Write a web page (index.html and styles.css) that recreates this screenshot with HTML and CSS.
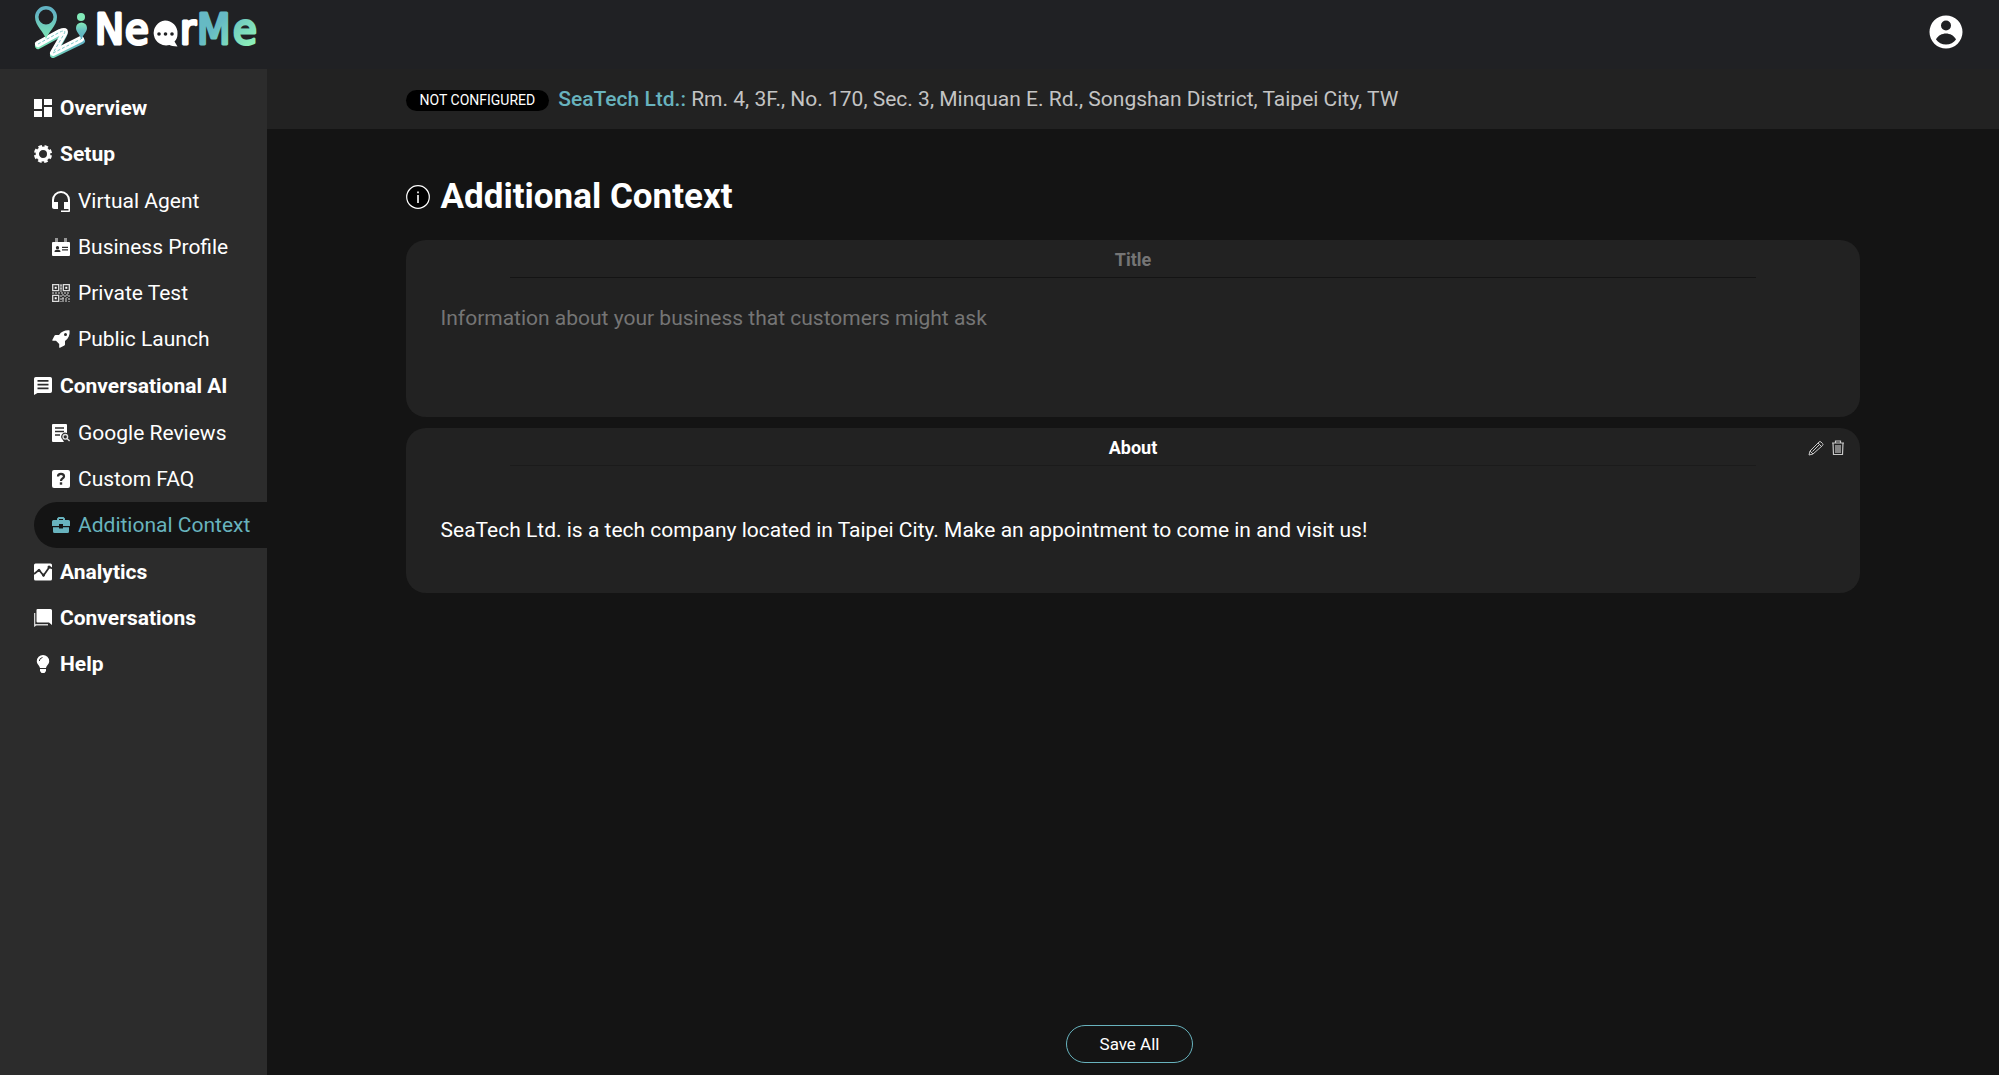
FILE: index.html
```html
<!DOCTYPE html>
<html lang="en">
<head>
<meta charset="utf-8">
<meta name="viewport" content="width=device-width, initial-scale=1">
<title>NearMe – Additional Context</title>
<link rel="stylesheet" href="styles.css">
</head>
<body>
<header class="header">
  <a class="logo" href="#" aria-label="NearMe home">
    <svg width="226" height="56" viewBox="34 4 226 56">
      <defs>
        <linearGradient id="pin" x1="0" y1="0" x2="0" y2="1"><stop offset="0.2" stop-color="#62b3c3"/><stop offset="1" stop-color="#7ee8b4"/></linearGradient>
        <linearGradient id="figure" x1="0" y1="0" x2="0" y2="1"><stop offset="0" stop-color="#83eab9"/><stop offset="0.5" stop-color="#68bfc2"/><stop offset="1" stop-color="#5aaec0"/></linearGradient>
        <linearGradient id="road" x1="0" y1="0" x2="1" y2="0"><stop offset="0" stop-color="#7ee8b8"/><stop offset="1" stop-color="#62b3c3"/></linearGradient>
        <linearGradient id="me" gradientUnits="userSpaceOnUse" x1="222" y1="20" x2="250" y2="48"><stop offset="0" stop-color="#66bac4"/><stop offset="1" stop-color="#8df2b8"/></linearGradient>
      </defs>
      <path d="M38 46 62 33 Q66 31 64 35 L53 55 82 41" fill="none" stroke="url(#road)" stroke-width="6" stroke-linecap="round" stroke-linejoin="round"/>
      <path d="M38 44 60 32 Q67 29 64 34 L53 53 81 39" fill="none" stroke="#fff" stroke-width="6" stroke-linecap="round" stroke-linejoin="round"/>
      <path d="M38 44 60 32 Q67 29 64 34 L53 53 81 39" fill="none" stroke="#7cc9c8" stroke-width="1" stroke-dasharray="3 2"/>
      <path fill="url(#pin)" fill-rule="evenodd" d="M46 39C44 32 35 26 35 17a11 11 0 0 1 22 0C57 26 48 32 46 39ZM46 9.500a7.500 7.500 0 1 0 0 15 7.500 7.500 0 0 0 0-15Z"/>
      <circle cx="81" cy="17" r="4" fill="#82eab9"/>
      <path fill="url(#figure)" d="M81 39c-1-5-5-7-5-11a5.500 5.500 0 0 1 11 0c0 4-4 6-5 11Z"/>
      <text class="logo-name" y="44" fill="#fff" stroke="#fff"><tspan x="95">N</tspan><tspan x="125">e</tspan><tspan x="180">r</tspan></text>
      <text class="logo-name" y="44" fill="url(#me)" stroke="url(#me)"><tspan x="197">M</tspan><tspan x="233">e</tspan></text>
      <path fill="#fff" d="M165 20.500a12.500 12.500 0 0 1 12.500 13c0 4-1 6-3 8l3 5c-4 0-7-1-8-1.500A12.500 12.500 0 1 1 165 20.500Z"/>
      <g fill="#202124"><circle cx="159" cy="34" r="1.800"/><circle cx="165.500" cy="34" r="1.800"/><circle cx="172" cy="34" r="1.800"/></g>
    </svg>
  </a>
  <button class="icon-button account" type="button" aria-label="Account">
    <svg width="34" height="34" viewBox="0 0 34 34"><path fill="#fff" fill-rule="evenodd" d="M17 .500a16.500 16.500 0 1 1 0 33 16.500 16.500 0 0 1 0-33ZM17 5.500a5 5 0 1 0 0 10 5 5 0 0 0 0-10ZM7 24.500c2-4 6-6 10-6s8 2 10 6c-2 3-6 5-10 5s-8-2-10-5Z"/></svg>
  </button>
</header>

<div class="layout">
  <nav class="sidebar" aria-label="Main">
    <ul class="menu">
      <li><a class="item" href="#"><svg class="icon" viewBox="0 0 18 18"><path d="M0 0h8v10H0zM10 0h8v6h-8zM0 12h8v6H0zM10 8h8v10h-8z"/></svg>Overview</a></li>
      <li>
        <a class="item" href="#"><svg class="icon" viewBox="0 0 18 18"><g fill="none" stroke="currentColor"><circle cx="9" cy="9" r="5.700" stroke-width="3.400"/><circle cx="9" cy="9" r="8" stroke-width="2.200" stroke-dasharray="3.700 2.583" stroke-dashoffset="-1.300"/></g></svg>Setup</a>
        <ul class="submenu">
          <li><a class="item" href="#"><svg class="icon" viewBox="0 0 18 18"><path d="M0 8a9 9 0 0 1 18 0v11c0 .600-.500 1-1 1H9v-1.500h7.500V17H12v-7h4V8A7 7 0 0 0 2 8v2h4v7H2c-1 0-2-1-2-2Z"/></svg>Virtual Agent</a></li>
          <li><a class="item" href="#"><svg class="icon" viewBox="0 0 18 18"><path fill-rule="evenodd" d="M1 4h16q1 0 1 1v12q0 1-1 1H1q-1 0-1-1V5q0-1 1-1ZM5.500 8a1.600 1.600 0 1 0 0 3.300 1.600 1.600 0 0 0 0-3.300ZM2.500 14h6c0-2-1-2.300-3-2.300s-3 .300-3 2.300ZM10 8.700h6v1.300h-6ZM10 11.200h6v1.300h-6Z"/><path d="M3 0h3v4H3zM12 0h3v4h-3z" opacity=".500"/></svg>Business Profile</a></li>
          <li><a class="item" href="#"><svg class="icon" viewBox="0 0 18 18"><g fill="none" stroke="#ddd"><path d="M.700.700h6v6h-6zM11.300.700h6v6h-6zM.700 11.300h6v6h-6z" stroke-width="1.300"/><path d="M9 0v8M8 2h2M8 5h2M0 9h18M9 11v7M11 10v8M13 11v3M15 10v4M17 11v7M13 17h3M10 15h5" stroke-dasharray="2 1"/></g><path d="M2.700 2.700h2v2h-2zM13.300 2.700h2v2h-2zM2.700 13.300h2v2h-2z"/></svg>Private Test</a></li>
          <li><a class="item" href="#"><svg class="icon" viewBox="0 0 18 18"><path fill-rule="evenodd" d="M17.600.400C13 0 9.500 1.500 7 5H3.500Q3 5 2.600 5.600L.300 10q-.300.800.500.800H4L7.200 14v3.200q0 .800.800.500l4.400-2.300q.600-.400.600-.900V11C16.500 8.500 18 5 17.600.400ZM13.500 3a1.500 1.500 0 1 1 0 3 1.500 1.500 0 0 1 0-3Z"/></svg>Public Launch</a></li>
        </ul>
      </li>
      <li>
        <a class="item" href="#"><svg class="icon" viewBox="0 0 18 18"><path fill-rule="evenodd" d="M1.800 0h14.400Q18 0 18 1.800v12.400q0 1.800-1.800 1.800H3.500L0 18V1.800Q0 0 1.800 0ZM3.500 3v1.700h11V3ZM3.500 6.800v1.700h11V6.800ZM3.500 10.600v1.700h11v-1.700Z"/></svg>Conversational AI</a>
        <ul class="submenu">
          <li><a class="item" href="#"><svg class="icon" viewBox="0 0 18 18"><path fill-rule="evenodd" d="M1 0h13q1 0 1 1v8a4 4 0 0 0-4.500 6.500L12 18H1q-1 0-1-1V1q0-1 1-1ZM3 3.200v1.500h9V3.200ZM3 6.700v1.500h9V6.700ZM3 10.200v1.500h5v-1.500Z"/><g fill="none" stroke="#ddd" stroke-width="1.400"><circle cx="13.300" cy="12.800" r="2.300"/><path d="m15 14.500 2.600 2.600"/></g></svg>Google Reviews</a></li>
          <li><a class="item" href="#"><svg class="icon" viewBox="0 0 18 18"><rect width="18" height="18" rx="2"/><path d="M6 6.500C6 3 12 3 12 6.500 12 8.500 9 8.500 9 11" fill="none" stroke="#2c2c2c" stroke-width="2.200"/><path d="M7.800 12.300h2.400v2.400H7.800z" fill="#2c2c2c"/></svg>Custom FAQ</a></li>
          <li><a class="item active" href="#" aria-current="page"><svg class="icon" viewBox="0 0 18 18"><path fill-rule="evenodd" d="M5 4V2.500L6.500 1h5L13 2.500V4h3.500Q18 4 18 5.500V10h-7V8H7v2H0V5.500Q0 4 1.500 4ZM7 4h4V3H7ZM1 11.200h6V12.500h4v-1.300h6v4.300q0 1.500-1.500 1.500h-13Q1 17 1 15.500Z"/></svg>Additional Context</a></li>
        </ul>
      </li>
      <li><a class="item" href="#"><svg class="icon" viewBox="0 0 18 18"><rect y=".500" width="18" height="17" rx="1.500"/><path d="m0 11 5-4 4.500 5.500L15.500 4 18 5.500" fill="none" stroke="#2c2c2c" stroke-width="1.700"/><g fill="#2c2c2c"><circle cx="5" cy="7.500" r="1.500"/><circle cx="9.500" cy="12" r="1.500"/><circle cx="15" cy="4" r="1.500"/></g></svg>Analytics</a></li>
      <li><a class="item" href="#"><svg class="icon" viewBox="0 0 18 18"><path d="M3.500 0h13Q18 0 18 1.500V16l-3-2.500H3.500Q2.500 13.500 2.500 12.500V1Q2.500 0 3.500 0Z"/><path d="M0 4h1.300v11H14v1.500H2.500L0 18Z" opacity=".800"/></svg>Conversations</a></li>
      <li><a class="item" href="#"><svg class="icon" viewBox="0 0 18 18"><path d="M9 0a6.200 6.200 0 0 1 6.200 6.200c0 3-2.700 4.300-3.200 6.800H6c-.500-2.500-3.200-3.800-3.200-6.800A6.200 6.200 0 0 1 9 0ZM6 14h6v2l-1.500 2h-3L6 16Z"/><path d="M5.300 6Q5.500 3 8.500 2.500" fill="none" stroke="#2c2c2c"/></svg>Help</a></li>
    </ul>
  </nav>

  <main class="main">
    <div class="location">
      <span class="badge">NOT CONFIGURED</span>
      <p class="address"><strong class="company">SeaTech Ltd.:</strong> Rm. 4, 3F., No. 170, Sec. 3, Minquan E. Rd., Songshan District, Taipei City, TW</p>
    </div>
    <form class="content">
      <div class="heading">
        <button class="icon-button" type="button" aria-label="About additional context">
          <svg width="24" height="24" viewBox="0 0 24 24"><circle cx="12" cy="12" r="11.300" fill="#000" stroke="#fff" stroke-width="1.200"/><path d="M11.200 10h1.600v8h-1.600zM11.200 6.500h1.600v1.700h-1.600z" fill="#fff"/></svg>
        </button>
        <h1 class="title">Additional Context</h1>
      </div>
      <section class="card">
        <input class="card-title" type="text" placeholder="Title" aria-label="Title">
        <textarea class="card-text" placeholder="Information about your business that customers might ask" aria-label="Information"></textarea>
      </section>
      <section class="card">
        <h2 class="card-title saved">About</h2>
        <div class="actions">
          <button class="icon-button" type="button" aria-label="Edit">
            <svg width="16" height="16" viewBox="0 0 16 16" fill="none" stroke="#c8c8c8"><path d="M1 15l1-4L11 2q1-1 2 0l1.500 1.500q1 1 0 2L5 14ZM2 11l3 3M10 3l3.500 3.500M4.500 11.500l7-7"/></svg>
          </button>
          <button class="icon-button" type="button" aria-label="Delete">
            <svg width="14" height="16" viewBox="0 0 14 16" fill="none" stroke="#c8c8c8"><path d="M1 3h12M4.500 3V1h5v2M2 3l.500 11.500h9L12 3M5 5v8M7 5v8M9 5v8" stroke-width="1.200"/></svg>
          </button>
        </div>
        <p class="card-body">SeaTech Ltd. is a tech company located in Taipei City. Make an appointment to come in and visit us!</p>
      </section>
      <button class="save" type="submit">Save All</button>
    </form>
  </main>
</div>
</body>
</html>
```
FILE: styles.css
```css
* { box-sizing: border-box; }

body {
  margin: 0;
  min-height: 100vh;
  display: flex;
  flex-direction: column;
  background: #141414;
  color: #fff;
  font: 21px/24px Roboto, "Liberation Sans", sans-serif;
}

ul { list-style: none; margin: 0; padding: 0; }
h1, h2, p { margin: 0; }
a { color: inherit; text-decoration: none; }
svg { display: block; }

.header {
  display: flex;
  align-items: center;
  justify-content: space-between;
  height: 69px;
  padding: 0 36px 6px 34px;
  background: #202124;
}

.logo-name {
  font: 43px "DejaVu Sans Condensed", "DejaVu Sans", sans-serif;
  stroke-width: 3px;
  stroke-linejoin: round;
}

.icon-button { padding: 0; border: 0; background: none; cursor: pointer; }

.layout { flex: 1; display: flex; }

.sidebar {
  flex: none;
  width: 267px;
  padding: 16px 0 16px 34px;
  background: #2c2c2c;
}

.item {
  display: flex;
  align-items: center;
  gap: 8px;
  height: 46px;
  font-weight: 700;
  white-space: nowrap;
}

.submenu { margin: 1px 0; }
.submenu .item { padding-left: 18px; font-weight: 400; }

.item.active {
  border-radius: 23px 0 0 23px;
  background: #141414;
  color: #68b3be;
}

.icon { flex: none; width: 18px; height: 18px; fill: currentColor; overflow: visible; }

.main { flex: 1; min-width: 0; display: flex; flex-direction: column; }

.location {
  display: flex;
  align-items: center;
  gap: 9px;
  min-height: 60px;
  padding: 0 8%;
  background: #222;
}

.badge {
  flex: none;
  margin-top: 3px;
  padding: 0 14px;
  border-radius: 11px;
  background: #000;
  font-size: 14px;
  line-height: 21px;
}

.address { color: #c4c4c4; }
.company { color: #68b3be; font-weight: 500; }

.content {
  flex: 1;
  display: flex;
  flex-direction: column;
  gap: 11px;
  padding: 48px 8% 12px;
}

.heading { display: flex; align-items: center; gap: 11px; margin-bottom: 13px; }
.title { font-size: 35px; line-height: 39px; font-weight: 700; }

.card {
  position: relative;
  display: flex;
  flex-direction: column;
  min-height: 165px;
  padding: 0 35px 12px;
  border-radius: 20px;
  background: #222;
}

.card-title {
  height: 38px;
  margin: 0 5%;
  padding: 2px 0 0;
  border: 0;
  border-bottom: 1px solid #141414;
  background: none;
  color: #fff;
  font: 700 18px/36px Roboto, "Liberation Sans", sans-serif;
  text-align: center;
}

.card-title.saved { border-color: #1b1b1b; }

.card-text {
  height: 103px;
  margin: 24px 0 0;
  padding: 4px 0;
  border: 0;
  background: none;
  color: #fff;
  font: inherit;
  resize: none;
}

.card-title::placeholder, .card-text::placeholder { color: #757575; opacity: 1; }

.card-body { margin-top: 52px; }

.actions {
  position: absolute;
  top: 12px;
  right: 15px;
  display: flex;
  gap: 7px;
}

.save {
  align-self: center;
  width: 127px;
  height: 38px;
  margin: auto 7px 0 0;
  border: 1px solid #68b3be;
  border-radius: 19px;
  background: none;
  color: #fff;
  font: 17px/20px Roboto, "Liberation Sans", sans-serif;
}
```
